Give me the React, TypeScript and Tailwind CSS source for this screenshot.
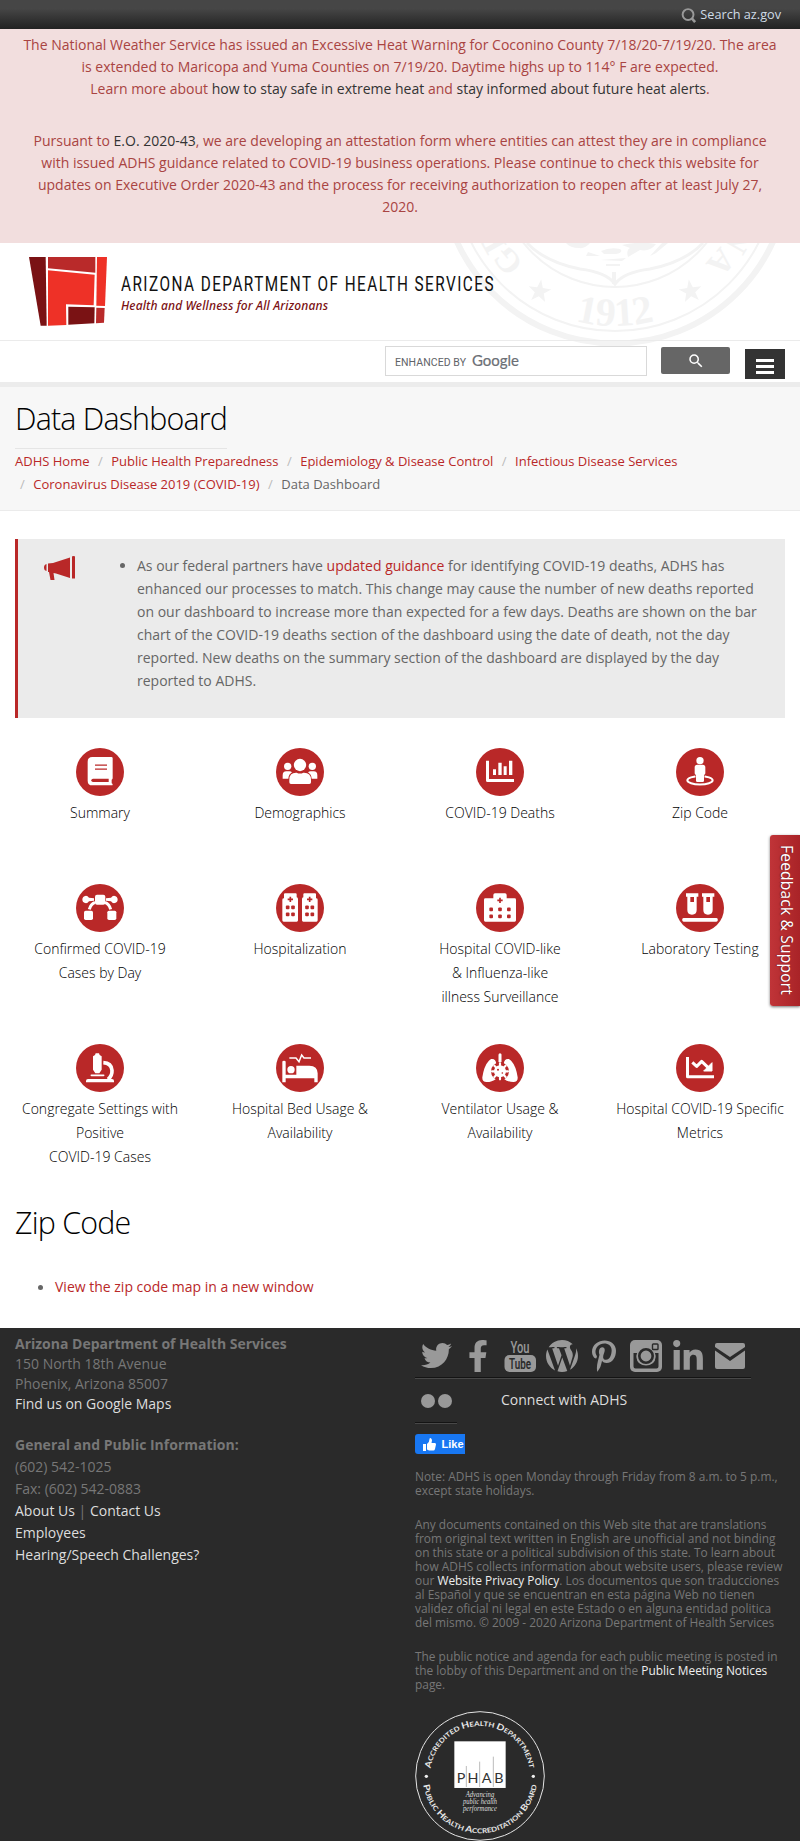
import React from "react";
import { FaTwitter, FaFacebookF, FaPinterestP, FaLinkedinIn } from "react-icons/fa";
import { MdSearch } from "react-icons/md";

const RED = "#b92828";

function Plus({ x, y }: { x: number; y: number }) {
  return <path d={`M${x - 8} ${y}h16M${x} ${y - 8}v16`} stroke={RED} strokeWidth={5} fill="none" />;
}

function Dots({ xs, ys }: { xs: number[]; ys: number[] }) {
  return (
    <>
      {ys.map((y) =>
        xs.map((x) => <rect key={`${x}-${y}`} x={x - 5.5} y={y - 5.5} width={11} height={11} rx={3} fill={RED} />)
      )}
    </>
  );
}

const glyphs: Record<string, React.ReactNode> = {
  summary: (
    <>
      <path d="M49 27H106Q110 27 110 31V91Q110 93 107 95V106Q110 107 110 110Q110 112 107 112H49Q35 112 35 98V41Q35 27 49 27Z" fill="#fff" />
      <path d="M57 51.5H93M57 63.5H93" stroke={RED} strokeWidth={4} />
      <path d="M51 92H98V102H51Q46 102 46 97Q46 92 51 92Z" fill={RED} />
    </>
  ),
  demographics: (
    <>
      <circle cx={35} cy={55} r={11} fill="#fff" />
      <circle cx={109} cy={55} r={11} fill="#fff" />
      <path d="M20 92V82Q20 70 31 70H40Q45 70 48 73Q38 79 37 92ZM124 92V82Q124 70 113 70H104Q99 70 96 73Q106 79 107 92Z" fill="#fff" />
      <circle cx={72} cy={51} r={18.5} fill="#fff" />
      <path d="M40 103V95Q40 74 60 74H62Q72 79 82 74H84Q105 74 105 95V103Q105 108 100 108H45Q40 108 40 103Z" fill="#fff" />
    </>
  ),
  deaths: (
    <>
      <path d="M34.500 38V97.500H114" stroke="#fff" strokeWidth={9} strokeLinejoin="round" fill="none" />
      <path d="M51 64h9v17h-9zM67 44h10v37H67zM83 55h9v26h-9zM99 38h10v43H99z" fill="#fff" />
    </>
  ),
  zip: (
    <>
      <ellipse cx={72} cy={97} rx={38} ry={12.5} fill="none" stroke="#fff" strokeWidth={6} />
      <path d="M64 50H80Q88 50 88 58V76Q88 80 84 81V98Q84 102 80 102H64Q60 102 60 98V81Q56 80 56 76V58Q56 50 64 50Z" fill="#fff" stroke={RED} strokeWidth={3} paintOrder="stroke" />
      <circle cx={72} cy={38} r={11} fill="#fff" />
    </>
  ),
  cases: (
    <>
      <rect x={57} y={32} width={31} height={30} rx={6} fill="#fff" />
      <rect x={24} y={80} width={27} height={28} rx={5} fill="#fff" />
      <rect x={94} y={80} width={27} height={28} rx={5} fill="#fff" />
      <path d="M30 35Q35 35 39 41L54 43V50L39 52Q35 58 30 58Q19 56 19 46.500Q19 37 30 35ZM114 35Q109 35 105 41L90 43V50L105 52Q109 58 114 58Q125 56 125 46.500Q125 37 114 35Z" fill="#fff" />
      <path d="M57 55Q44 60 40 76M87 55Q100 60 104 76" stroke="#fff" strokeWidth={9} fill="none" />
    </>
  ),
  hospitalization: (
    <>
      <path d="M24 43V31Q24 28 27 28H59Q62 28 62 31V40Q66 41 66 45V109Q66 113 62 113H23Q19 113 19 109V47Q19 43 24 43ZM82 40V31Q82 28 85 28H117Q120 28 120 31V43Q125 43 125 47V109Q125 113 121 113H82Q78 113 78 109V45Q78 41 82 40Z" fill="#fff" />
      <Plus x={43} y={46} />
      <Plus x={101} y={46} />
      <Dots xs={[35, 51, 93, 109]} ys={[70, 91]} />
    </>
  ),
  hospital: (
    <>
      <path d="M52 43V33Q52 28 57 28H87Q92 28 92 33V43H116Q120 43 120 47V109Q120 113 116 113H28Q24 113 24 109V47Q24 43 28 43Z" fill="#fff" />
      <Plus x={72} y={49} />
      <Dots xs={[45.500, 72, 98.500]} ys={[76, 97]} />
    </>
  ),
  lab: (
    <>
      <path d="M30 28H67V38H62V78Q62 92 48 92Q34 92 34 78V38H30ZM78 28H115V38H110V78Q110 92 96 92Q82 92 82 78V38H78Z" fill="#fff" />
      <path d="M43 39h11v15H43zM91 39h11v15H91z" fill={RED} />
      <rect x={19} y={102} width={106} height={11} rx={4} fill="#fff" />
    </>
  ),
  congregate: (
    <>
      <path d="M59 28H69L71 33L77 37V77L70 88H58L51 77V37L57 33Z" fill="#fff" />
      <path d="M46 94H83" stroke="#fff" strokeWidth={5} strokeLinecap="round" />
      <path d="M82 56Q106 57 108 79Q109 95 96 106" stroke="#fff" strokeWidth={11} fill="none" />
      <path d="M30 111Q30 105 36 105H108Q114 105 114 111V115H30Z" fill="#fff" />
    </>
  ),
  bed: (
    <>
      <path d="M19 53Q19 50 24 50Q29 50 29 53V92H61V65H100Q125 66 125 88V115H115V103H29V115H19Z" fill="#fff" />
      <circle cx={45} cy={77} r={11} fill="#fff" />
      <path d="M40 42H60L69 53L77 33L84 42H105" stroke="#fff" strokeWidth={4.500} fill="none" />
    </>
  ),
  ventilator: (
    <>
      <path d="M72 32V52" stroke="#fff" strokeWidth={9} strokeLinecap="round" />
      <path d="M46 45Q59 43 61 60V104Q48 114 32 114Q18 113 19 100Q24 66 38 51Q42 46 46 45ZM98 45Q85 43 83 60V104Q96 114 112 114Q126 113 125 100Q120 66 106 51Q102 46 98 45Z" fill="#fff" />
      <circle cx={72} cy={82} r={27} fill={RED} />
      <circle cx={72} cy={82} r={18} fill="#fff" />
      <path d="M72 58V106M48 82H96M55 65L89 99M89 65L55 99" stroke="#fff" strokeWidth={6.500} strokeLinecap="round" />
      <circle cx={66} cy={77} r={3} fill={RED} />
      <circle cx={79} cy={87} r={2.500} fill={RED} />
    </>
  ),
  metrics: (
    <>
      <path d="M34.500 39V98.500H114" stroke="#fff" strokeWidth={9} strokeLinejoin="round" fill="none" />
      <path d="M49 55L62 67L77 52L99 73" stroke="#fff" strokeWidth={9} strokeLinejoin="round" fill="none" />
      <path d="M108 56V81H83Z" fill="#fff" stroke="#fff" strokeWidth={3} strokeLinejoin="round" />
    </>
  ),
};

const cards: { icon: string; lines: string[] }[][] = [
  [
    { icon: "summary", lines: ["Summary"] },
    { icon: "demographics", lines: ["Demographics"] },
    { icon: "deaths", lines: ["COVID-19 Deaths"] },
    { icon: "zip", lines: ["Zip Code"] },
  ],
  [
    { icon: "cases", lines: ["Confirmed COVID-19", "Cases by Day"] },
    { icon: "hospitalization", lines: ["Hospitalization"] },
    { icon: "hospital", lines: ["Hospital COVID-like", "& Influenza-like", "illness Surveillance"] },
    { icon: "lab", lines: ["Laboratory Testing"] },
  ],
  [
    { icon: "congregate", lines: ["Congregate Settings with", "Positive", "COVID-19 Cases"] },
    { icon: "bed", lines: ["Hospital Bed Usage &", "Availability"] },
    { icon: "ventilator", lines: ["Ventilator Usage &", "Availability"] },
    { icon: "metrics", lines: ["Hospital COVID-19 Specific", "Metrics"] },
  ],
];

function Card({ icon, lines }: { icon: string; lines: string[] }) {
  return (
    <a className="flex flex-col items-center">
      <svg viewBox="0 0 144 144" className="size-12">
        <circle cx={72} cy={72} r={72} fill={RED} />
        {glyphs[icon]}
      </svg>
      <div className="mt-[5px] text-center text-[14px] leading-[24px] font-light whitespace-nowrap text-black">
        {lines.map((l) => (
          <div key={l}>{l}</div>
        ))}
      </div>
    </a>
  );
}

function star(cx: number, cy: number, r: number, rot: number) {
  return Array.from({ length: 10 }, (_, i) => {
    const a = ((i * 36 - 90 + rot) * Math.PI) / 180;
    const q = i % 2 ? r * 0.4 : r;
    return `${(cx + q * Math.cos(a)).toFixed(1)},${(cy + q * Math.sin(a)).toFixed(1)}`;
  }).join(" ");
}

function StateSeal() {
  return (
    <svg viewBox="435 243 360 106" className="pointer-events-none absolute top-0 left-[435px] h-[106px] w-[360px]">
      <g fill="none" stroke="#f3f3f3">
        <circle cx={615} cy={170} r={173.500} strokeWidth={6} />
        <circle cx={615} cy={170} r={161} strokeWidth={2} />
        <circle cx={615} cy={170} r={117} strokeWidth={2} />
        <path d="M527 243Q545 262 580 269Q606 272 615 284Q624 272 650 269Q685 262 703 243" strokeWidth={3} />
        <path d="M614 272V284" strokeWidth={4} />
      </g>
      <g fill="#f3f3f3">
        <polygon points={star(539.500, 291.500, 12, 8)} />
        <polygon points={star(690.500, 291.500, 12, -8)} />
        <path d="M566 243H590Q585 249 579 248Q570 248 566 243ZM601 251Q610 247 620 249Q624 252 616 254L604 254ZM622 245Q640 241 656 244Q650 252 640 250L628 257Q626 250 630 248ZM588 252L600 256L586 256ZM600 260L626 258L622 261ZM606 264H620V266H606ZM650 256L662 243H668L656 253Z" />
        <path id="seal-year" d="M459 170A156 156 0 0 0 771 170" fill="none" />
        <text fontFamily="Liberation Serif" fontWeight="bold" fontSize={40}>
          <textPath href="#seal-year" startOffset="50%" textAnchor="middle">1912</textPath>
        </text>
        <g fontFamily="Liberation Serif" fontWeight="bold" fontSize={33} textAnchor="middle">
          <text transform="translate(516 254) rotate(-130)">G</text>
          <text transform="translate(501 235) rotate(-120)">R</text>
          <text transform="translate(730 235) rotate(120)">N</text>
          <text transform="translate(713 255) rotate(131)">A</text>
        </g>
      </g>
    </svg>
  );
}

function Logo() {
  return (
    <svg viewBox="87 66 234 207" className="h-[69px] w-[78px]">
      <path d="M87 66H137L140 272H122Z" fill="#7a1214" />
      <path d="M144 66H286V113L144 100Z" fill="#b92a2a" />
      <path d="M291 66H321L315 213L289 212Z" fill="#ee3127" />
      <path d="M144 106L284 119L281 211L198 208L199 270L144 272Z" fill="#ee3127" />
      <path d="M205 215L284 217L283 265L205 269Z" fill="#7a1214" />
      <path d="M289 218L314 219L312 263L288 265Z" fill="#b92a2a" />
    </svg>
  );
}

function Separator() {
  return <span className="px-[8.500px] text-[#bbb]">/</span>;
}

function Crumb({ children, first }: { children: React.ReactNode; first?: boolean }) {
  return (
    <>
      {!first && <Separator />}
      <span className="text-[#b92828]">{children}</span>
    </>
  );
}

function Phab() {
  return (
    <svg viewBox="45 62 390 391" className="h-[130.300px] w-[130px]">
      <circle cx={240} cy={257} r={193} fill="none" stroke="#e4e4e4" strokeWidth={3} />
      <path id="phab-top" d="M90 257A150 150 0 0 1 390 257" fill="none" />
      <path id="phab-bottom" d="M68 257A172 172 0 0 0 412 257" fill="none" />
      <g fill="#e8e8e8" fontFamily="Lato" fontWeight="bold" fontSize={20}>
        <text>
          <textPath href="#phab-top" startOffset="50%" textAnchor="middle" textLength={426} lengthAdjust="spacingAndGlyphs">
            <tspan fontSize={26}>A</tspan>CCREDITED <tspan fontSize={26}>H</tspan>EALTH <tspan fontSize={26}>D</tspan>EPARTMENT
          </textPath>
        </text>
        <text>
          <textPath href="#phab-bottom" startOffset="50%" textAnchor="middle" textLength={486} lengthAdjust="spacingAndGlyphs">
            <tspan fontSize={26}>P</tspan>UBLIC <tspan fontSize={26}>H</tspan>EALTH <tspan fontSize={26}>A</tspan>CCREDITATION <tspan fontSize={26}>B</tspan>OARD
          </textPath>
        </text>
      </g>
      <circle cx={79} cy={258} r={5} fill="#eee" />
      <circle cx={400} cy={258} r={5} fill="#eee" />
      <rect x={163} y={153} width={154} height={140} fill="#fff" />
      <path d="M199 227V290M239 214V290M280 199V290" stroke="#999" strokeWidth={2} />
      <g fill="#333" fontFamily="Lato" fontSize={43} textAnchor="middle">
        <text x={183} y={279}>P</text>
        <text x={219} y={279}>H</text>
        <text x={260} y={279}>A</text>
        <text x={297} y={279}>B</text>
      </g>
      <g fill="#ddd" fontFamily="Liberation Serif" fontStyle="italic" fontSize={21.500} textAnchor="middle">
        <text x={240} y={319} textLength={86} lengthAdjust="spacingAndGlyphs">Advancing</text>
        <text x={240} y={341} textLength={102} lengthAdjust="spacingAndGlyphs">public health</text>
        <text x={240} y={363} textLength={102} lengthAdjust="spacingAndGlyphs">performance</text>
      </g>
    </svg>
  );
}

function SocialCell({ children }: { children: React.ReactNode }) {
  return (
    <div className="flex h-[51px] w-[42px] items-center justify-center border-b border-[#484848] text-[#999] shadow-[inset_0_-1px_0_#141414]">
      {children}
    </div>
  );
}

export default function App() {
  return (
    <div className="relative h-[1841px] w-[800px] overflow-hidden bg-white font-['Open_Sans',sans-serif] text-[14px] text-[#666]">
      <div className="flex h-[29px] items-center justify-end bg-linear-to-b from-[#464646] from-30% to-[#222] pr-[19px]">
        <svg viewBox="0 0 16 16" className="mt-[1px] mr-[3px] h-[15px] w-[16px]">
          <circle cx={7} cy={7} r={5.800} fill="none" stroke="#999" strokeWidth={2.100} />
          <path d="M11 11L14.500 15" stroke="#999" strokeWidth={2.800} />
        </svg>
        <span className="text-[12.700px] leading-[29px] text-[#cfdbe6]">Search az.gov</span>
      </div>

      <div className="h-[214px] bg-[#f2dede] pt-[5px] text-center text-[14px] leading-[22px] whitespace-nowrap text-[#a94442]">
        <p>
          The National Weather Service has issued an Excessive Heat Warning for Coconino County 7/18/20-7/19/20. The area
          <br />
          is extended to Maricopa and Yuma Counties on 7/19/20. Daytime highs up to 114° F are expected.
          <br />
          Learn more about <a className="text-[#333]">how to stay safe in extreme heat</a> and{" "}
          <a className="text-[#333]">stay informed about future heat alerts</a>.
        </p>
        <p className="mt-[30px]">
          Pursuant to <a className="text-[#333]">E.O. 2020-43</a>, we are developing an attestation form where entities can attest they are in compliance
          <br />
          with issued ADHS guidance related to COVID-19 business operations. Please continue to check this website for
          <br />
          updates on Executive Order 2020-43 and the process for receiving authorization to reopen after at least July 27,
          <br />
          2020.
        </p>
      </div>

      <header className="relative h-[144px]">
        <StateSeal />
        <div className="relative flex h-[98px] items-start border-b border-[#ebebeb] pt-[14px] pl-[29px]">
          <Logo />
          <svg viewBox="0 0 400 60" className="ml-[14px] h-[60px] w-[400px]">
            <text x={0} y={34} fontFamily="Roboto" fontSize={21} fill="#111" textLength={374} lengthAdjust="spacingAndGlyphs" fontWeight={400} letterSpacing={2}>
              ARIZONA DEPARTMENT OF HEALTH SERVICES
            </text>
            <text x={0} y={53} fontFamily="Noto Sans" fontStyle="italic" fontWeight={500} fontSize={12} fill="#7b1113" textLength={207}>
              Health and Wellness for All Arizonans
            </text>
          </svg>
        </div>
        <div className="relative flex h-[46px] items-start border-b-[5px] border-[#ececec] pl-[385px]">
          <div className="mt-[5px] flex h-[30px] w-[262px] items-center border border-[#d9d9d9] bg-white pl-[9px]">
            <svg viewBox="0 0 130 28" className="h-[28px] w-[130px]">
              <text x={0} y={18.500} fontFamily="Roboto" fontSize={10.500} fill="#5f6368" textLength={71}>ENHANCED BY</text>
              <text x={77} y={18.500} fontFamily="Lato" fontSize={16} fill="#6b6f75" stroke="#6b6f75" strokeWidth={0.200} textLength={47} lengthAdjust="spacingAndGlyphs">Google</text>
            </svg>
          </div>
          <div className="mt-[6px] ml-[14px] flex h-[27px] w-[69px] items-center justify-center rounded-[2px] bg-[#666] text-white">
            <MdSearch className="size-[18px]" />
          </div>
          <div className="mt-[8px] ml-[15px] flex h-[30px] w-[40px] flex-col items-center gap-[3px] bg-[#333] pt-[10px]">
            <i className="h-[3px] w-[18px] bg-white" />
            <i className="h-[3px] w-[18px] bg-white" />
            <i className="h-[3px] w-[18px] bg-white" />
          </div>
        </div>
      </header>

      <section className="h-[124px] border-b border-[#ebebeb] bg-[#f7f7f7] pl-[15px]">
        <div className="flex">
          <h1 className="h-[62px] border-b border-[#e5e5e5] pt-[11px] text-[30.400px] leading-[42px] font-light tracking-[-0.800px] whitespace-nowrap text-black">
            Data Dashboard
          </h1>
        </div>
        <div className="mt-[1px] text-[13px] leading-[23px] whitespace-nowrap">
          <div>
            <Crumb first>ADHS Home</Crumb>
            <Crumb>Public Health Preparedness</Crumb>
            <Crumb>Epidemiology &amp; Disease Control</Crumb>
            <Crumb>Infectious Disease Services</Crumb>
          </div>
          <div className="-ml-[3.500px]">
            <Crumb>Coronavirus Disease 2019 (COVID-19)</Crumb>
            <Separator />
            <span>Data Dashboard</span>
          </div>
        </div>
      </section>

      <main className="h-[817px] pt-[28px]">
        <div className="mx-[15px] flex h-[179px] border-l-[3px] border-[#b92828] bg-[#ebebeb] pt-[15px]">
          <svg viewBox="0 0 31 24" className="mt-[2px] ml-[26px] h-[24px] w-[31px] shrink-0" fill={RED}>
            <path d="M2.500 8V15Q0 14.500 0 11.500Q0 8.500 2.500 8ZM4 7.500L9 7L26 1.500V22L12 17.500L9.500 17L10.500 24H6.500L5 16L4 16ZM28 0.500Q28 0 29.500 0Q31 0 31 0.500V22.500H28Z" />
          </svg>
          <div className="mt-[9px] ml-[45px] size-[5px] shrink-0 rounded-full bg-[#666]" />
          <p className="ml-[12px] text-[14px] leading-[23.100px] whitespace-nowrap">
            As our federal partners have <a className="text-[#b92828]">updated guidance</a> for identifying COVID-19 deaths, ADHS has
            <br />
            enhanced our processes to match. This change may cause the number of new deaths reported
            <br />
            on our dashboard to increase more than expected for a few days. Deaths are shown on the bar
            <br />
            chart of the COVID-19 deaths section of the dashboard using the date of death, not the day
            <br />
            reported. New deaths on the summary section of the dashboard are displayed by the day
            <br />
            reported to ADHS.
          </p>
        </div>
        <div className="mt-[30px] grid grid-rows-[136px_160px_136px]">
          {cards.map((row, i) => (
            <div key={i} className="grid grid-cols-4">
              {row.map((c) => (
                <Card key={c.icon} {...c} />
              ))}
            </div>
          ))}
        </div>
        <h2 className="mt-[22px] ml-[15px] text-[30.400px] leading-[42px] font-light tracking-[-0.800px] text-black">Zip Code</h2>
        <div className="mt-[31px] ml-[38px] flex items-center">
          <span className="size-[5px] rounded-full bg-[#666]" />
          <a className="ml-[12px] text-[14px] leading-[24px] text-[#b92828]">View the zip code map in a new window</a>
        </div>
      </main>

      <footer className="flex h-[513px] bg-[#2a2a2a] text-[#777]">
        <div className="w-[400px] pt-[6px] pl-[15px] text-[14px] whitespace-nowrap">
          <div className="leading-[20px]">
            <b className="font-bold">Arizona Department of Health Services</b>
            <br />
            150 North 18th Avenue
            <br />
            Phoenix, Arizona 85007
            <br />
            <a className="font-medium text-[#ddd]">Find us on Google Maps</a>
          </div>
          <div className="mt-[20px] leading-[22px]">
            <b className="font-bold">General and Public Information:</b>
            <br />
            (602) 542-1025
            <br />
            Fax: (602) 542-0883
            <br />
            <a className="font-medium text-[#ddd]">About Us</a> | <a className="font-medium text-[#ddd]">Contact Us</a>
            <br />
            <a className="font-medium text-[#ddd]">Employees</a>
            <br />
            <a className="font-medium text-[#ddd]">Hearing/Speech Challenges?</a>
          </div>
        </div>
        <div className="w-[400px] pl-[15px]">
          <div className="flex">
            <SocialCell><FaTwitter className="mt-[5px] size-[31px]" /></SocialCell>
            <SocialCell><FaFacebookF className="mt-[5px] size-[32px]" /></SocialCell>
            <SocialCell>
              <svg viewBox="0 0 32 32" className="mt-[5px] size-[32px]">
                <text x={16} y={13.300} textAnchor="middle" fontFamily="Roboto" fontWeight={500} fontSize={17} fill="#999" textLength={19} lengthAdjust="spacingAndGlyphs">You</text>
                <rect x={0.500} y={15} width={31.500} height={17} rx={5} fill="#999" />
                <text x={16} y={28.500} textAnchor="middle" fontFamily="Roboto" fontWeight={600} fontSize={14.500} fill="#2a2a2a" textLength={22} lengthAdjust="spacingAndGlyphs">Tube</text>
              </svg>
            </SocialCell>
            <SocialCell>
              <svg viewBox="43 43 426 426" className="mt-[5px] size-[32px]" fill="#999">
                <path d="M61.7 169.4l101.5 278C92.2 413 43.3 340.2 43.3 256c0-30.9 6.6-60.1 18.4-86.6zm337.9 75.9c0-26.3-9.4-44.5-17.5-58.7-10.8-17.5-20.9-32.4-20.9-49.900 0-19.600 14.800-37.800 35.700-37.800.900 0 1.800.100 2.800.200-37.900-34.700-88.300-55.900-143.700-55.900-74.300 0-139.700 38.100-177.800 95.900 5 .200 9.700.300 13.700.300 22.200 0 56.700-2.700 56.700-2.700 11.500-.700 12.800 16.200 1.400 17.500 0 0-11.500 1.300-24.300 2l77.500 230.400L249.800 247l-33.100-90.800c-11.500-.700-22.300-2-22.300-2-11.500-.700-10.100-18.200 1.300-17.500 0 0 35.100 2.700 56 2.700 22.200 0 56.700-2.700 56.700-2.700 11.500-.700 12.800 16.200 1.400 17.500 0 0-11.500 1.300-24.300 2l76.900 228.700 21.200-70.900c9-29.400 16-50.500 16-68.700zm-139.900 29.300l-63.800 185.500c19.100 5.600 39.200 8.700 60.100 8.700 24.800 0 48.500-4.300 70.600-12.100-.600-.900-1.100-1.900-1.500-2.900l-65.400-179.200zm183-120.700c.900 6.800 1.400 14 1.400 21.900 0 21.600-4 45.800-16.200 76.200l-65 187.900C426.200 403 468.700 334.500 468.700 256c0-37-9.400-71.800-26-102.100z" />
              </svg>
            </SocialCell>
            <SocialCell><FaPinterestP className="mt-[5px] size-[32px]" /></SocialCell>
            <SocialCell>
              <svg viewBox="0 0 32 32" className="mt-[5px] size-[32px]">
                <rect width={32} height={32} rx={5} fill="#999" />
                <path d="M3.500 13H7Q4.500 25 16 25Q27.500 25 25 13H28.500V26.500Q28.500 28.500 26.500 28.500H5.500Q3.500 28.500 3.500 26.500Z" fill="#2a2a2a" />
                <circle cx={16} cy={16} r={9.500} fill="#999" />
                <circle cx={16} cy={16} r={6.700} fill="none" stroke="#2a2a2a" strokeWidth={2.600} />
                <rect x={22.500} y={4} width={5.500} height={5.500} rx={0.800} fill="#999" stroke="#2a2a2a" strokeWidth={1.400} />
              </svg>
            </SocialCell>
            <SocialCell><FaLinkedinIn className="mt-[7px] size-[34px]" /></SocialCell>
            <SocialCell>
              <svg viewBox="0 0 30 26" className="mt-[5px] h-[26px] w-[30px]" fill="#999">
                <path d="M2 0H28Q30 0 30 2V4L15 14L0 4V2Q0 0 2 0ZM0 7.500L15 18L30 7.500V24Q30 26 28 26H2Q0 26 0 24Z" />
              </svg>
            </SocialCell>
          </div>
          <div className="flex h-[45px]">
            <div className="flex h-[45px] w-[42px] items-center justify-center gap-[3px] border-b border-[#484848] shadow-[inset_0_-1px_0_#141414]">
              <i className="size-[14px] rounded-full bg-[#999]" />
              <i className="size-[14px] rounded-full bg-[#999]" />
            </div>
            <span className="mt-[9px] ml-[44px] text-[14px] leading-[24px] text-[#ddd]">Connect with ADHS</span>
          </div>
          <div className="mt-[10px] flex h-[20px] w-[50px] items-center overflow-hidden rounded-l-[3px] bg-[#1877f2] pl-[8px] font-['Liberation_Sans'] text-[11px] font-bold text-white">
            <svg viewBox="0 0 13 13" className="mr-[5.500px] size-[13px] shrink-0" fill="#fff">
              <path d="M0 6H3V13H0ZM4 6Q6.500 4 6.500 1Q6.500 0 7.500 0Q9 0.500 9 2.500L8.500 5H12Q13 5 13 6.500L12 11Q11.500 12.500 10.500 12.500H6L4 11.500Z" />
            </svg>
            Like
          </div>
          <div className="mt-[15px] text-[11.900px] leading-[14px] whitespace-nowrap">
            <p>
              Note: ADHS is open Monday through Friday from 8 a.m. to 5 p.m.,
              <br />
              except state holidays.
            </p>
            <p className="mt-[20px]">
              Any documents contained on this Web site that are translations
              <br />
              from original text written in English are unofficial and not binding
              <br />
              on this state or a political subdivision of this state. To learn about
              <br />
              how ADHS collects information about website users, please review
              <br />
              our <a className="font-medium text-[#eee]">Website Privacy Policy</a>. Los documentos que son traducciones
              <br />
              al Español y que se encuentran en esta página Web no tienen
              <br />
              validez oficial ni legal en este Estado o en alguna entidad politica
              <br />
              del mismo. © 2009 - 2020 Arizona Department of Health Services
            </p>
            <p className="mt-[20px]">
              The public notice and agenda for each public meeting is posted in
              <br />
              the lobby of this Department and on the <a className="font-medium text-[#eee]">Public Meeting Notices</a>
              <br />
              page.
            </p>
          </div>
          <div className="mt-[20px]">
            <Phab />
          </div>
        </div>
      </footer>

      <div className="absolute top-[835px] right-0 flex h-[171px] w-[30px] items-center justify-center rounded-l-[3px] bg-linear-to-r from-[#c03438] to-[#a92327] pl-[2px] shadow-[0_1px_3px_rgba(0,0,0,0.55)]">
        <span className="text-[15.500px] tracking-[0.220px] whitespace-nowrap text-white [text-shadow:0_1px_1px_rgba(0,0,0,0.4)] [writing-mode:vertical-rl]">Feedback &amp; Support</span>
      </div>
    </div>
  );
}
